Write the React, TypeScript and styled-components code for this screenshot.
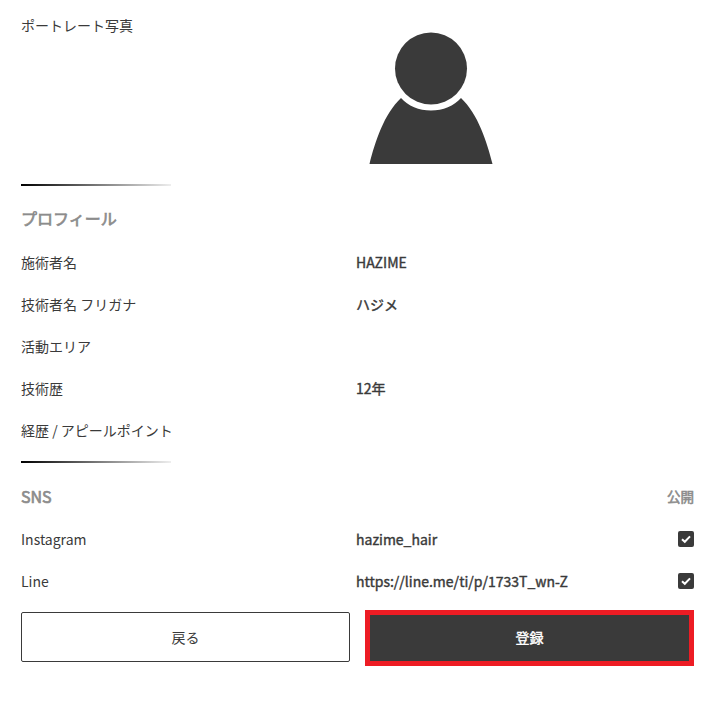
import styled, { createGlobalStyle } from 'styled-components'

const GlobalStyle = createGlobalStyle`
    html, body {
        margin: 0;
        padding: 0;
        background: #fff;
    }
    body {
        font-family: "Noto Sans CJK JP", "Noto Sans", sans-serif;
        font-size: 14px;
        color: #3a3a3a;
    }
`

const Page = styled.div`
    width: 720px;
    height: 713px;
    box-sizing: border-box;
    padding: 0 26px 0 21px;
    overflow: hidden;
`

const PortraitRow = styled.div`
    display: grid;
    grid-template-columns: 335px 1fr;
    height: 184px;
`

const PortraitLabel = styled.div`
    line-height: 20px;
    padding-top: 15px;
`

const Divider = styled.div`
    width: 150px;
    height: 2px;
    background: linear-gradient(to right, #000, #eee);
`

const SectionHead = styled.div`
    display: flex;
    justify-content: space-between;
    align-items: center;
    height: ${(p: { $tall?: boolean }) => (p.$tall ? '66px' : '64px')};
`

const SectionTitle = styled.h2`
    margin: 0;
    font-size: 16px;
    font-weight: 400;
    -webkit-text-stroke: 0.7px #8c8c8c;
    color: #8c8c8c;
`

const PublicLabel = styled.span`
    font-size: 13.5px;
    font-weight: 400;
    -webkit-text-stroke: 0.6px #8c8c8c;
    color: #8c8c8c;
`

const Row = styled.div`
    display: grid;
    grid-template-columns: 335px 1fr auto;
    align-items: center;
    height: 42px;
`

const Value = styled.div`
    -webkit-text-stroke: 0.4px #3a3a3a;
`

const ProfileList = styled.div`
    margin-top: -9px;
    margin-bottom: 10px;
`

const SnsList = styled.div`
    margin-top: -11px;
`

const Check = styled.span`
    display: flex;
    align-items: center;
    justify-content: center;
    width: 16px;
    height: 16px;
    border-radius: 2px;
    background: #3a3a3a;
`

const Buttons = styled.div`
    display: grid;
    grid-template-columns: 329px 329px;
    column-gap: 15px;
    align-items: start;
    margin-top: 8px;
`

const BackButton = styled.button`
    height: 50px;
    margin-top: 2px;
    padding: 0;
    border: 1px solid #3a3a3a;
    border-radius: 2px;
    background: #fff;
    color: #3a3a3a;
    font: inherit;
`

const SubmitButton = styled.button`
    height: 56px;
    border: 5px solid #ed1c24;
    background: #3a3a3a;
    color: #fff;
    font: inherit;
    -webkit-text-stroke: 0.4px #fff;
    padding: 0 0 2px;
`

const Avatar = () => (
    <svg width="124" height="134" viewBox="0 0 124 134" style={{ display: 'block', margin: '30px 0 0 13px' }}>
        <circle cx="62" cy="38.5" r="36" fill="#3a3a3a" />
        <path
            d="M0.5 134 C6 112 15 84 32 68 C39 76 50 80.5 62 80.5 C74 80.5 85 76 92 68 C109 84 118 112 123.5 134 Z"
            fill="#3a3a3a"
        />
    </svg>
)

const CheckMark = () => (
    <svg width="12" height="12" viewBox="0 0 12 12">
        <path d="M2 6.2 L4.8 8.8 L10 3.4" fill="none" stroke="#fff" strokeWidth="2" />
    </svg>
)

const profile = [
    { label: '施術者名', value: 'HAZIME' },
    { label: '技術者名 フリガナ', value: 'ハジメ' },
    { label: '活動エリア', value: '' },
    { label: '技術歴', value: '12年' },
    { label: '経歴 / アピールポイント', value: '' },
]

const sns = [
    { label: 'Instagram', value: 'hazime_hair' },
    { label: 'Line', value: 'https://line.me/ti/p/1733T_wn-Z' },
]

export default function App() {
    return (
        <Page>
            <GlobalStyle />
            <PortraitRow>
                <PortraitLabel>ポートレート写真</PortraitLabel>
                <div>
                    <Avatar />
                </div>
            </PortraitRow>
            <Divider />
            <SectionHead>
                <SectionTitle>プロフィール</SectionTitle>
            </SectionHead>
            <ProfileList>
                {profile.map((item) => (
                    <Row key={item.label}>
                        <div>{item.label}</div>
                        <Value>{item.value}</Value>
                    </Row>
                ))}
            </ProfileList>
            <Divider />
            <SectionHead $tall>
                <SectionTitle>SNS</SectionTitle>
                <PublicLabel>公開</PublicLabel>
            </SectionHead>
            <SnsList>
                {sns.map((item) => (
                    <Row key={item.label}>
                        <div>{item.label}</div>
                        <Value>{item.value}</Value>
                        <Check>
                            <CheckMark />
                        </Check>
                    </Row>
                ))}
            </SnsList>
            <Buttons>
                <BackButton>戻る</BackButton>
                <SubmitButton>登録</SubmitButton>
            </Buttons>
        </Page>
    )
}
